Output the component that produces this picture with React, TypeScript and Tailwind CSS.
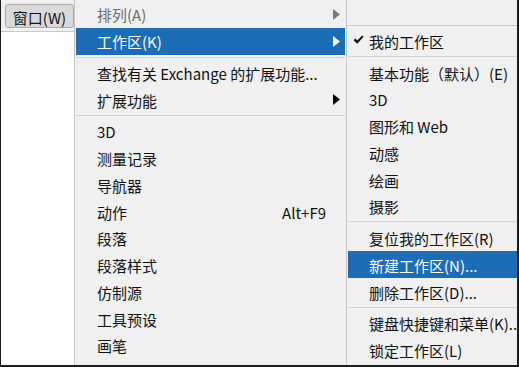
import React from "react";

const FONT = { fontFamily: '"Noto Sans CJK SC", "Noto Sans", sans-serif' };

function Arrow({ color }: { color: string }) {
  return (
    <svg width="7" height="11" viewBox="0 0 7 11" className="shrink-0">
      <path d="M0 0 L7 5.5 L0 11 Z" fill={color} />
    </svg>
  );
}

function Check() {
  return (
    <svg width="11" height="10" viewBox="0 0 11 10" className="shrink-0">
      <path d="M0.6 5.2 L2.4 3.6 L4.3 5.6 L9.2 0.4 L10.6 1.8 L4.3 8.8 Z" fill="#111" />
    </svg>
  );
}

type Item =
  | { sep: true }
  | {
      sep?: false;
      label: string;
      arrow?: boolean;
      shortcut?: string;
      disabled?: boolean;
      active?: boolean;
      check?: boolean;
    };

function Sep() {
  return (
    <div className="h-[5px] shrink-0 flex items-center">
      <div className="h-px w-full bg-[#d3d3d3]" />
    </div>
  );
}

function MainRow({ it }: { it: Exclude<Item, { sep: true }> }) {
  const color = it.active ? "text-white" : it.disabled ? "text-[#6d6d6d]" : "text-[#111]";
  return (
    <div
      className={`h-[26.75px] shrink-0 flex items-center pl-[21px] pr-[5px] ${
        it.active ? "bg-[#1b6db6]" : ""
      } ${color}`}
    >
      <span className="flex-1 whitespace-nowrap text-[15px] leading-none pt-[1px]">{it.label}</span>
      {it.shortcut && (
        <span className="mr-[14px] whitespace-nowrap text-[15px] leading-none pt-[1px]">{it.shortcut}</span>
      )}
      {it.arrow && <Arrow color={it.active ? "#ffffff" : it.disabled ? "#7a7a7a" : "#000000"} />}
    </div>
  );
}

function SubRow({ it }: { it: Exclude<Item, { sep: true }> }) {
  return (
    <div
      className={`h-[26.75px] shrink-0 flex items-center ${
        it.active ? "bg-[#1b6db6] text-white" : "text-[#111]"
      }`}
    >
      <div className="w-[21px] shrink-0 flex items-center justify-end pr-[5px]">
        {it.check && <Check />}
      </div>
      <span className="whitespace-nowrap text-[15px] leading-none pt-[2px]">{it.label}</span>
    </div>
  );
}

const mainItems: Item[] = [
  { label: "排列(A)", arrow: true, disabled: true },
  { label: "工作区(K)", arrow: true, active: true },
  { sep: true },
  { label: "查找有关 Exchange 的扩展功能..." },
  { label: "扩展功能", arrow: true },
  { sep: true },
  { label: "3D" },
  { label: "测量记录" },
  { label: "导航器" },
  { label: "动作", shortcut: "Alt+F9" },
  { label: "段落" },
  { label: "段落样式" },
  { label: "仿制源" },
  { label: "工具预设" },
  { label: "画笔" },
  { label: "画笔设置", shortcut: "F5" },
];

const subItems: Item[] = [
  { label: "我的工作区", check: true },
  { sep: true },
  { label: "基本功能（默认）(E)" },
  { label: "3D" },
  { label: "图形和 Web" },
  { label: "动感" },
  { label: "绘画" },
  { label: "摄影" },
  { sep: true },
  { label: "复位我的工作区(R)" },
  { label: "新建工作区(N)...", active: true },
  { label: "删除工作区(D)..." },
  { sep: true },
  { label: "键盘快捷键和菜单(K)..." },
  { label: "锁定工作区(L)" },
];

export default function App() {
  return (
    <div
      style={FONT}
      className="w-[519px] h-[367px] flex border-l border-r-2 border-b-2 border-[#1c1c1c] overflow-hidden bg-[#f0f0f0]"
    >
      {/* left app area */}
      <div className="w-[73px] shrink-0 flex flex-col">
        <div className="h-[32px] shrink-0 bg-[#f0f0f0] border-b border-[#c9c9c9] pt-[4px] pl-[4px]">
          <div className="w-[69px] h-[24px] rounded-[3px] border border-[#a9a9a9] bg-[#d9d9d9] flex items-center justify-center text-[15px] leading-none text-[#111]">
            <span className="pt-[2px]">窗口(W)</span>
          </div>
        </div>
        <div className="flex-1 bg-white" />
      </div>

      {/* main menu */}
      <div className="w-[272px] shrink-0 border-l border-[#c6c6c6] bg-[#f0f0f0] px-[1px] pt-[1px] flex flex-col overflow-hidden">
        {mainItems.map((it, i) => (it.sep ? <Sep key={i} /> : <MainRow key={i} it={it} />))}
      </div>

      {/* sub menu */}
      <div className="flex-1 min-w-0 border-l border-[#c6c6c6] bg-[#f0f0f0] flex flex-col overflow-hidden">
        <div className="h-[26px] shrink-0 border-b border-[#c9c9c9]" />
        <div className="pl-[1px] pt-[1px] flex flex-col">
          {subItems.map((it, i) => (it.sep ? <Sep key={i} /> : <SubRow key={i} it={it} />))}
        </div>
      </div>
    </div>
  );
}
